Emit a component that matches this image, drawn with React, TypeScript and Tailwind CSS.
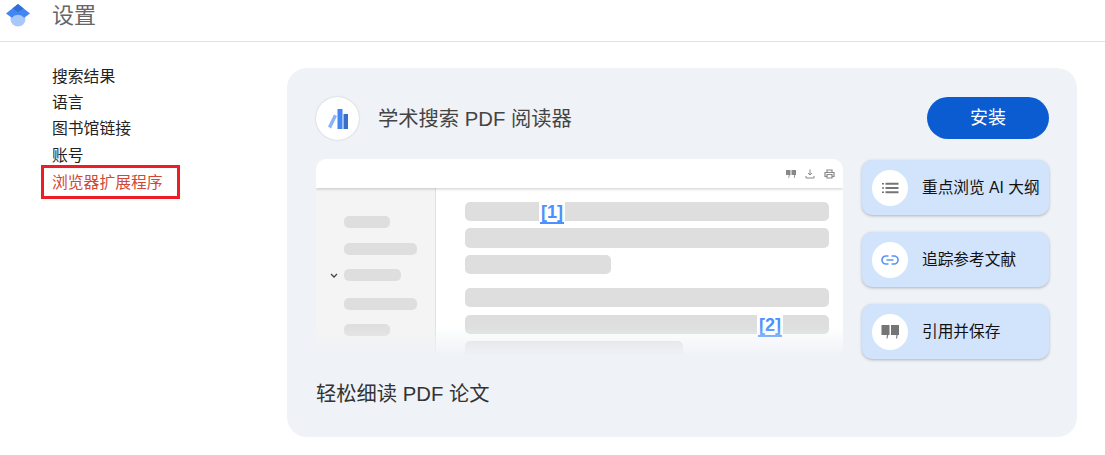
import React from "react";

const font = { fontFamily: '"Liberation Sans", "Noto Sans CJK SC", sans-serif' };

function Logo() {
  return (
    <svg width="24" height="24" viewBox="0 0 24 24">
      <circle cx="12" cy="15" r="7.500" fill="#a8c7fa" />
      <path d="M12 0 L24 9.500 L18.200 13.800 A8 8 0 0 0 5.800 13.800 L0 9.500 Z" fill="#4285f4" />
      <path d="M12 0 L17.500 4.500 L12 8 L6.500 4.500 Z" fill="#2f6fd6" />
    </svg>
  );
}

function Row({ children, className = "" }: { children?: React.ReactNode; className?: string }) {
  return <div className={`bg-[#dedede] rounded-[5px] ${className}`}>{children}</div>;
}

function Cite({ n }: { n: string }) {
  return (
    <span className="flex h-[22px] w-[24px] justify-center bg-white text-[18px] leading-[20px] font-bold text-[#4d90fe] border-b-2 border-[#4d90fe] mx-[1px]">
      [{n}]
    </span>
  );
}

function Feature({ icon, label }: { icon: React.ReactNode; label: string }) {
  return (
    <div className="flex h-[55px] items-center rounded-[10px] bg-[#d2e3fc] pl-[10px] shadow-[0_1px_3px_rgba(60,64,67,0.35)]">
      <div className="flex h-[36px] w-[36px] items-center justify-center rounded-full bg-white">{icon}</div>
      <span className="ml-[14px] text-[15.700px] text-[#111]">{label}</span>
    </div>
  );
}

export default function App() {
  const nav = [
    ["搜索结果", "h-[26px]"],
    ["语言", "h-[25px]"],
    ["图书馆链接", "h-[28px]"],
    ["账号", "h-[25px]"],
  ];
  return (
    <div className="h-[455px] w-[1105px] overflow-hidden bg-white" style={font}>
      <header className="flex h-[42px] items-start border-b border-[#e2e2e2]">
        <div className="ml-[6px] mt-[4px]"><Logo /></div>
        <h1 className="ml-[22px] text-[22px] leading-[32px] text-[#666]">设置</h1>
      </header>
      <div className="flex">
        <nav className="ml-[41px] mt-[22px] w-[139px] text-[15.800px] text-[#222]">
          {nav.map(([t, h]) => (
            <div key={t} className={`${h} flex items-center pl-[11px]`}>{t}</div>
          ))}
          <div className="mt-[-3px] h-[34px] border-[3px] border-[#ee1c25] pl-[8px] leading-[30px] text-[#d14836]">
            浏览器扩展程序
          </div>
        </nav>
        <main className="ml-[107px] mt-[26px] h-[369px] w-[790px] rounded-[20px] bg-[#eff2f7] pl-[29px] pr-[28px] pt-[29px]">
          <div className="flex h-[43px] items-start justify-between">
            <div className="flex items-center">
              <div className="flex h-[43px] w-[43px] items-center justify-center rounded-full bg-white shadow-[0_0_2px_rgba(60,64,67,0.25)]">
                <svg width="22" height="20" viewBox="0 0 22 20">
                  <path d="M1 17.500 L4 19.500 L10 7 L7 5.500 Z" fill="#8ab4f8" />
                  <rect x="10.500" y="0" width="5" height="20" fill="#4285f4" />
                  <rect x="16.500" y="5" width="4.500" height="15" fill="#3b6fc4" />
                </svg>
              </div>
              <span className="ml-[19px] mt-[1px] text-[20.300px] text-[#444]">学术搜索 PDF 阅读器</span>
            </div>
            <button className="h-[42px] w-[122px] rounded-full bg-[#0b5bd1] text-[18px] text-white">安装</button>
          </div>

          <div className="mt-[19px] flex gap-[19px]">
            <div className="relative h-[197px] w-[527px] overflow-hidden rounded-t-[10px] bg-white">
              <div className="relative z-[1] flex h-[29px] items-center justify-end gap-[9px] pr-[8px] shadow-[0_1px_3px_rgba(0,0,0,0.2)]">
                <svg width="10" height="8" viewBox="0 0 10 8" fill="#888"><path d="M0 0h4.500v5H3.800L3 8H2.300L2.800 5H0zM5.500 0h4.500v5H9.300L8.500 8H7.800L8.300 5H5.500z" /></svg>
                <svg width="10" height="10" viewBox="0 0 10 10" fill="none" stroke="#888" strokeWidth="1"><path d="M5 0.500V6M3 4l2 2 2-2M1 7v2h8V7" /></svg>
                <svg width="11" height="10" viewBox="0 0 11 10" fill="none" stroke="#888" strokeWidth="1.200"><path d="M3 3V1h5v2M3 7.500H1V3.500h9V7.500H8M3 5.500h5V9H3z" /></svg>
              </div>
              <div className="flex h-[168px]">
                <div className="w-[120px] border-r border-[#e2e2e2] bg-[#f4f4f4] pl-[28px] pt-[28px]">
                  <div className="flex flex-col">
                    <Row className="h-[12px] w-[46px] rounded-[3px]" />
                    <Row className="mt-[15px] h-[12px] w-[73px] rounded-[3px]" />
                    <div className="relative mt-[14px]">
                      <svg className="absolute left-[-14px] top-[4px]" width="8" height="6" viewBox="0 0 8 6" fill="none" stroke="#444" strokeWidth="1.300"><path d="M1 1l3 3 3-3" /></svg>
                      <Row className="h-[12px] w-[57px] rounded-[3px]" />
                    </div>
                    <Row className="mt-[17px] h-[12px] w-[73px] rounded-[3px]" />
                    <Row className="mt-[14px] h-[12px] w-[46px] rounded-[3px]" />
                  </div>
                </div>
                <div className="w-[393px] pl-[29px] pt-[14px]">
                  <div className="flex w-[364px] flex-col">
                    <div className="flex h-[19px] items-start">
                      <Row className="h-[19px] w-[74px] rounded-r-none" />
                      <Cite n="1" />
                      <Row className="h-[19px] flex-1 rounded-l-none" />
                    </div>
                    <Row className="mt-[7px] h-[20px]" />
                    <Row className="mt-[7px] h-[19px] w-[146px]" />
                    <Row className="mt-[14px] h-[19px]" />
                    <div className="mt-[8px] flex h-[19px] items-start">
                      <Row className="h-[19px] w-[292px] rounded-r-none" />
                      <Cite n="2" />
                      <Row className="h-[19px] flex-1 rounded-l-none" />
                    </div>
                    <Row className="mt-[7px] h-[19px] w-[218px]" />
                  </div>
                </div>
              </div>
              <div className="absolute inset-x-0 bottom-0 z-[2] h-[30px] bg-gradient-to-b from-[#eff2f700] to-[#eff2f7]" />
            </div>

            <div className="flex w-[187px] flex-col gap-[17px] pt-[1px]">
              <Feature
                label="重点浏览 AI 大纲"
                icon={
                  <svg width="18" height="12" viewBox="0 0 18 12" fill="#757575">
                    <path d="M1 1h2v1.500H1zM4.500 0.800h13v2h-13zM1 5.200h2v1.500H1zM4.500 5h13v2h-13zM1 9.500h2V11H1zM4.500 9.200h13v2h-13z" />
                  </svg>
                }
              />
              <Feature
                label="追踪参考文献"
                icon={
                  <svg width="18" height="10" viewBox="0 0 18 10" fill="none" stroke="#5a96f5" strokeWidth="1.700">
                    <path d="M7.500 1H5a4 4 0 0 0 0 8h2.500M10.500 1H13a4 4 0 0 1 0 8h-2.500M5.500 5h7" />
                  </svg>
                }
              />
              <Feature
                label="引用并保存"
                icon={
                  <svg width="18" height="14" viewBox="0 0 18 14" fill="#757575">
                    <path d="M0.500 0h8v10H7.200L6.500 13.500H5.500L6 10H0.500zM10 0h8v10H16.700L16 13.500H15L15.500 10H10z" />
                  </svg>
                }
              />
            </div>
          </div>

          <p className="mt-[20px] text-[20.300px] leading-[30px] text-[#333]">轻松细读 PDF 论文</p>
        </main>
      </div>
    </div>
  );
}
